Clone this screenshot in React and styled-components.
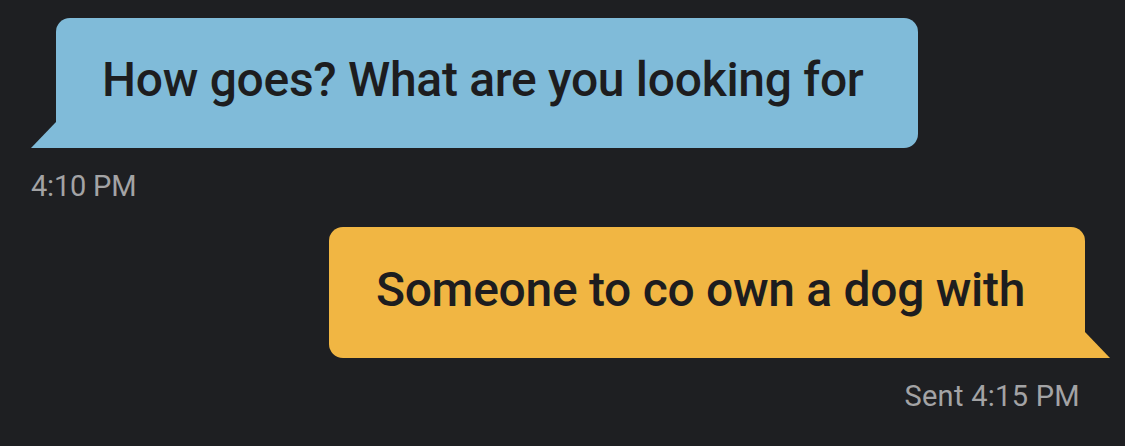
import React from "react";
import styled, { createGlobalStyle, css } from "styled-components";

const GlobalStyle = createGlobalStyle`
  html, body {
    margin: 0;
    padding: 0;
    background: #1e1f22;
  }
  body {
    font-family: Roboto, "Liberation Sans", sans-serif;
  }
`;

const Thread = styled.div`
  width: 1125px;
  height: 446px;
  box-sizing: border-box;
  padding: 18px 15px 0 31px;
  display: flex;
  flex-direction: column;
  background: #1e1f22;
  overflow: hidden;
`;

const Message = styled.div`
  display: flex;
  flex-direction: column;
  align-items: ${(p) => (p.$outgoing ? "flex-end" : "flex-start")};
  & + & {
    margin-top: 24px;
  }
`;

const Bubble = styled.div`
  position: relative;
  box-sizing: border-box;
  font-size: 48px;
  line-height: 56px;
  font-weight: 500;
  letter-spacing: -0.3px;
  color: #1d1d1f;
  white-space: nowrap;
  ${(p) =>
    p.$outgoing
      ? css`
          background: #f1b643;
          margin-right: 25px;
          padding: 35px 60px 40px 47px;
          border-radius: 14px 14px 0 14px;
          &::after {
            content: "";
            position: absolute;
            right: -25px;
            bottom: 0;
            width: 25px;
            height: 26px;
            background: #f1b643;
            clip-path: polygon(0 0, 100% 100%, 0 100%);
          }
        `
      : css`
          background: #80bbd9;
          margin-left: 25px;
          padding: 34px 54px 40px 46px;
          border-radius: 14px 14px 14px 0;
          &::after {
            content: "";
            position: absolute;
            left: -25px;
            bottom: 0;
            width: 25px;
            height: 26px;
            background: #80bbd9;
            clip-path: polygon(100% 0, 100% 100%, 0 100%);
          }
        `}
`;

const Meta = styled.div`
  margin-top: 21px;
  font-size: 29px;
  line-height: 34px;
  font-weight: 400;
  letter-spacing: ${(p) => (p.$outgoing ? "0.3px" : "-0.2px")};
  color: #a3a3a5;
  white-space: nowrap;
  margin-right: ${(p) => (p.$outgoing ? "30px" : "0")};
`;

const messages = [
  { id: 1, text: "How goes? What are you looking for", meta: "4:10 PM", outgoing: false },
  { id: 2, text: "Someone to co own a dog with", meta: "Sent 4:15 PM", outgoing: true },
];

export default function App() {
  return (
    <>
      <GlobalStyle />
      <Thread>
        {messages.map((m) => (
          <Message key={m.id} $outgoing={m.outgoing}>
            <Bubble $outgoing={m.outgoing}>{m.text}</Bubble>
            <Meta $outgoing={m.outgoing}>{m.meta}</Meta>
          </Message>
        ))}
      </Thread>
    </>
  );
}
